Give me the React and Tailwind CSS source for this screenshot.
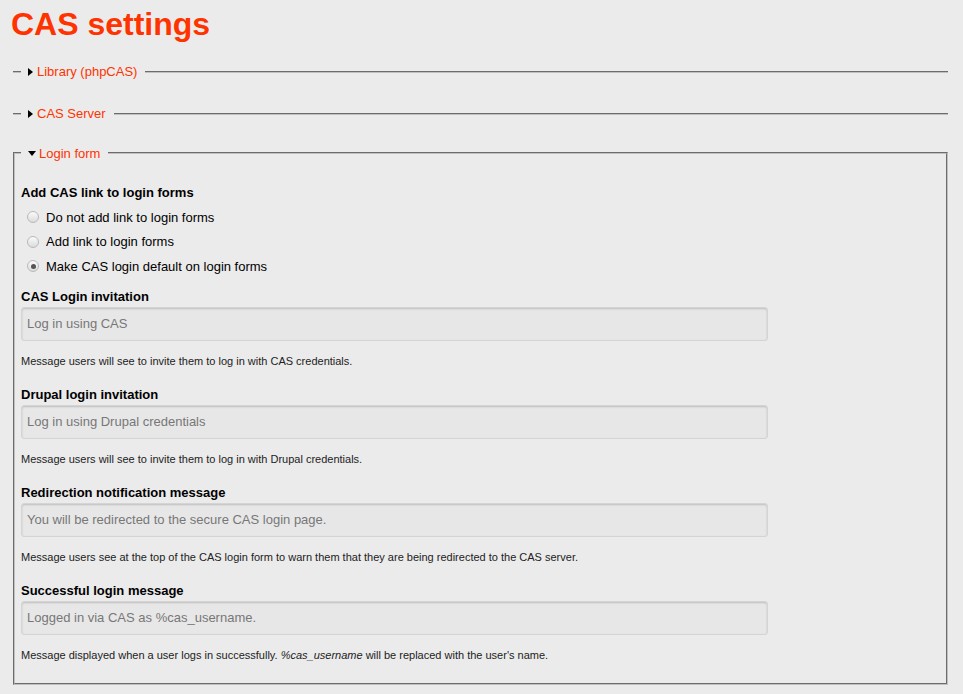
import React from "react";

const RightTri = () => (
  <svg width="5" height="8" viewBox="0 0 5 8" className="inline-block">
    <path d="M0 0 L5 4 L0 8 Z" fill="#000" />
  </svg>
);

const DownTri = () => (
  <svg width="8" height="5" viewBox="0 0 8 5" className="inline-block">
    <path d="M0 0 L8 0 L4 5 Z" fill="#000" />
  </svg>
);

function Radio({ label, checked }) {
  return (
    <div className="flex items-center h-[24.5px] pl-[6px]">
      <span className="w-[12px] h-[12px] rounded-full border border-[#b9b9b9] bg-gradient-to-b from-[#fafafa] to-[#dcdcdc] flex items-center justify-center">
        {checked && <span className="w-[5px] h-[5px] rounded-full bg-[#555]" />}
      </span>
      <span className="ml-[7px]">{label}</span>
    </div>
  );
}

function TextItem({ label, value, desc, first }) {
  return (
    <div className={first ? "mt-[9.5px]" : "mt-[18px]"}>
      <div className="font-bold leading-[18px]">{label}</div>
      <div className="mt-[1px] w-[747px] h-[34px] rounded-[3px] border border-[#d4d4d4] bg-[#e7e7e7] shadow-[inset_0_1px_2px_rgba(0,0,0,0.18)] flex items-center pl-[5px] text-[#777]">
        {value}
      </div>
      <div className="mt-[13px] text-[11px] leading-[14px] text-[#222]">{desc}</div>
    </div>
  );
}

function Collapsed({ title, className }) {
  return (
    <fieldset className={"border-0 border-t-2 [border-style:groove] border-[#c0c0c0] pl-[8px] " + className}>
      <legend className="pl-[7px] pr-[8px] leading-[18px]">
        <span className="inline-flex items-center gap-[4px] text-[#ff3300]">
          <RightTri />
          {title}
        </span>
      </legend>
    </fieldset>
  );
}

export default function App() {
  return (
    <div className="min-h-[694px] bg-[#ebebeb] font-['Liberation_Sans',Arial,sans-serif] text-[13px] text-black pl-[13px] pr-[15px] pt-[5px] pb-[8px]">
      <h1 className="text-[32px] leading-[38px] font-bold text-[#ff3300] -ml-[2px] mb-[20px]">
        CAS settings
      </h1>

      <Collapsed title="Library (phpCAS)" className="mb-[24px]" />
      <Collapsed title="CAS Server" className="mb-[20px]" />

      <fieldset className="border-2 [border-style:groove] border-[#c0c0c0] pl-[6px] pb-[21px]">
        <legend className="pl-[7px] pr-[8px] leading-[18px]">
          <span className="inline-flex items-center gap-[3px] text-[#ff3300]">
            <DownTri />
            Login form
          </span>
        </legend>

        <div className="mt-[21px] font-bold leading-[18px]">Add CAS link to login forms</div>
        <div className="mt-[3.5px]">
          <Radio label="Do not add link to login forms" />
          <Radio label="Add link to login forms" />
          <Radio label="Make CAS login default on login forms" checked />
        </div>

        <TextItem
          first
          label="CAS Login invitation"
          value="Log in using CAS"
          desc="Message users will see to invite them to log in with CAS credentials."
        />
        <TextItem
          label="Drupal login invitation"
          value="Log in using Drupal credentials"
          desc="Message users will see to invite them to log in with Drupal credentials."
        />
        <TextItem
          label="Redirection notification message"
          value="You will be redirected to the secure CAS login page."
          desc="Message users see at the top of the CAS login form to warn them that they are being redirected to the CAS server."
        />
        <TextItem
          label="Successful login message"
          value="Logged in via CAS as %cas_username."
          desc={
            <>
              Message displayed when a user logs in successfully. <em>%cas_username</em> will be replaced with the user's name.
            </>
          }
        />
      </fieldset>
    </div>
  );
}
